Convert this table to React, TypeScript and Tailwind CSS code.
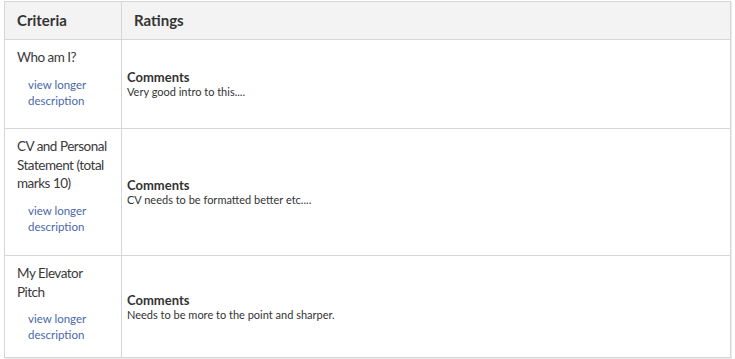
import React from "react";

const rows = [
  { title: "Who am I?", comment: "Very good intro to this....", h: "h-[89px]" },
  { title: "CV and Personal Statement (total marks 10)", comment: "CV needs to be formatted better etc....", h: "h-[127px]" },
  { title: "My Elevator Pitch", comment: "Needs to be more to the point and sharper.", h: "h-[101px]" },
];

export default function App() {
  return (
    <div className="w-[735px] h-[359px] bg-white overflow-hidden pt-[1px] pl-[4px] text-[#333333]" style={{ fontFamily: "Lato, 'Noto Sans', sans-serif" }}>
      <div className="w-[727px] border border-[#d6d6d6] shadow-[1px_1px_0_#ececec]">
        <div className="flex h-[38px] bg-[#f3f3f3] border-b border-[#d6d6d6]">
          <div className="w-[117px] shrink-0 border-r border-[#d6d6d6] flex items-center pl-[12px] text-[15px] font-bold">Criteria</div>
          <div className="flex-1 flex items-center pl-[12px] text-[15px] font-bold">Ratings</div>
        </div>
        {rows.map((r, i) => (
          <div key={i} className={`flex ${r.h} ${i < rows.length - 1 ? "border-b border-[#d6d6d6]" : ""}`}>
            <div className="w-[117px] shrink-0 border-r border-[#d6d6d6] pl-[12px] pr-[11px] pt-[8px]">
              <div className="text-[13.5px] leading-[18.5px] tracking-[-0.5px] text-[#3a3a3a]">{r.title}</div>
              <div className="mt-[10px] ml-[11px] text-[11.5px] leading-[16px] text-[#4a67a8]">
                view longer<br />description
              </div>
            </div>
            <div className="flex-1 flex flex-col justify-center pl-[5px]">
              <div className="text-[13px] font-bold leading-[15px]">Comments</div>
              <div className="text-[11px] leading-[13px]">{r.comment}</div>
            </div>
          </div>
        ))}
      </div>
    </div>
  );
}
